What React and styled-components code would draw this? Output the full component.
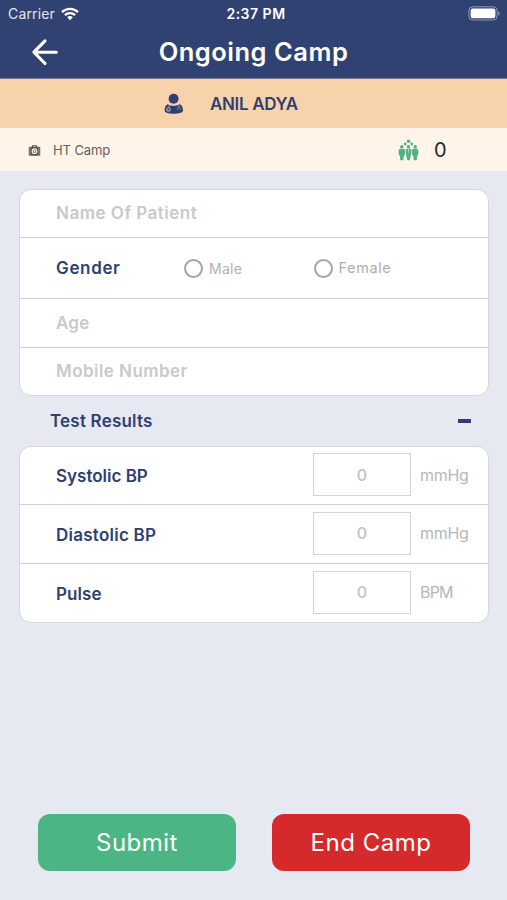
import React from "react";
import styled, { createGlobalStyle } from "styled-components";

const colors = {
  navy: "#304272",
  label: "#303f72",
  page: "#e6e9f2",
  line: "#d6d6d8",
  placeholder: "#c8c9cc",
  muted: "#aeafb2",
};

const GlobalStyle = createGlobalStyle`
  *, *::before, *::after { box-sizing: border-box; }
  body {
    margin: 0;
    background: ${colors.page};
    font-family: Inter, "Open Sans", sans-serif;
  }
`;

const Screen = styled.main`
  display: flex;
  flex-direction: column;
  width: 507px;
  height: 900px;
  overflow: hidden;
  background: ${colors.page};
`;

const Text = styled.span`
  font-size: ${(p) => p.$size}px;
  font-weight: ${(p) => p.$weight || 400};
  letter-spacing: ${(p) => p.$track || 0}px;
  color: ${(p) => p.$color || "inherit"};
  line-height: 1;
  white-space: nowrap;
`;

const Header = styled.header`
  height: 79px;
  background: ${colors.navy};
  border-bottom: 1px solid #7b7c8f;
  color: #fff;
`;

const StatusBar = styled.div`
  display: grid;
  grid-template-columns: 1fr auto 1fr;
  align-items: center;
  height: 27px;
  padding: 0 6px 0 8px;
`;

const StatusSide = styled.div`
  display: flex;
  align-items: center;
  justify-content: ${(p) => (p.$end ? "flex-end" : "flex-start")};
  gap: 6px;
`;

const Clock = styled.div`
  display: flex;
  padding-left: 3px;
`;

const TitleBar = styled.div`
  display: grid;
  grid-template-columns: 90px 1fr 90px;
  align-items: center;
  justify-items: center;
  height: 49px;
`;

const BackButton = styled.button`
  display: flex;
  padding: 0;
  border: 0;
  background: none;
  color: inherit;
`;

const Title = styled.h1`
  display: flex;
  margin: 0;
`;

const Banner = styled.section`
  display: flex;
  align-items: center;
  gap: 26px;
  height: 49px;
  padding: 1px 0 0 164px;
  background: #f8d2ab;
`;

const CampBar = styled.section`
  display: flex;
  align-items: center;
  height: 43px;
  padding: 0 61px 0 28px;
  background: #fff4ea;
`;

const CampName = styled.div`
  display: flex;
  flex: 1;
  align-items: center;
  gap: 12px;
  padding-top: 1px;
`;

const Count = styled.div`
  display: flex;
  align-items: center;
  gap: 15px;
`;

const Card = styled.section`
  flex: none;
  width: 470px;
  margin: ${(p) => p.$top || 0}px 0 0 19px;
  border: 1px solid ${colors.line};
  border-radius: 12px;
  background: #fff;
`;

const Row = styled.div`
  display: flex;
  align-items: center;
  height: ${(p) => p.$height}px;
  padding-left: 36px;

  & + & { border-top: 1px solid #d0d0d2; }
`;

const RowLabel = styled.div`
  display: flex;
  width: ${(p) => p.$width}px;
  padding-top: ${(p) => p.$drop || 0}px;
`;

const Radio = styled.label`
  display: flex;
  align-items: center;
  gap: 6px;
  width: 129.5px;
  padding-top: 1px;
`;

const RadioRing = styled.i`
  width: 19px;
  height: 19px;
  border: 2px solid #a3a4a6;
  border-radius: 50%;
`;

const SectionHeader = styled.div`
  display: flex;
  align-items: center;
  justify-content: space-between;
  height: 50px;
  padding: 0 36px 0 50px;
`;

const Minus = styled.i`
  width: 13px;
  height: 4px;
  background: ${colors.label};
`;

const ValueBox = styled.div`
  display: flex;
  align-items: center;
  justify-content: center;
  width: 98px;
  height: 43px;
  margin: 0 9px 2px 0;
  border: 1.5px solid #d3d4d6;
`;

const Unit = styled.div`
  display: flex;
  padding-bottom: 2px;
`;

const Actions = styled.footer`
  display: flex;
  gap: 36px;
  margin-top: auto;
  padding: 0 37px 29px 38px;
`;

const ActionButton = styled.button`
  display: flex;
  align-items: center;
  justify-content: center;
  width: 198px;
  height: 57px;
  padding: 0;
  border: 0;
  border-radius: 12px;
  background: ${(p) => p.$fill};
  color: #fff;
  font-family: inherit;
`;

const WifiIcon = () => (
  <svg width="18" height="14" viewBox="0 0 18 14" fill="none" stroke="#fff" strokeWidth="2.3">
    <path d="M1 5.1C5.5.8 12.5.8 17 5.1" />
    <path d="M3.9 8.2c2.9-2.8 7.3-2.8 10.2 0" />
    <path d="M6.2 10.3c1.6-1.6 4-1.6 5.6 0L9 13.2z" fill="#fff" stroke="none" />
  </svg>
);

const BatteryIcon = () => (
  <svg width="33" height="15" viewBox="0 0 33 15">
    <rect x=".8" y=".8" width="28.4" height="13.2" rx="4" fill="none" stroke="#8f98b4" />
    <rect x="2.6" y="2.6" width="24.8" height="9.6" rx="2.2" fill="#fff" />
    <path d="M30.4 5.1c1.8.8 1.8 3.8 0 4.6z" fill="#8f98b4" />
  </svg>
);

const BackIcon = () => (
  <svg
    width="28"
    height="28"
    viewBox="0 0 28 28"
    fill="none"
    stroke="#fff"
    strokeWidth="3.1"
    strokeLinecap="round"
    strokeLinejoin="round"
  >
    <path d="M14 2.9 2.9 14.2 14 25.5M3.5 14.2h21.8" />
  </svg>
);

const DoctorIcon = () => (
  <svg width="20" height="22" viewBox="0 0 20 22">
    <circle cx="9.6" cy="5.7" r="5" fill={colors.label} />
    <path
      d="M4 11.2c3 2.2 8.2 2.2 11.3 0 2.7.6 3.7 3.4 3.7 6.3 0 2.1-4.3 3.3-9.4 3.3S.6 19.6.6 17.5c0-2.9.9-5.7 3.4-6.3z"
      fill={colors.label}
    />
    <circle cx="4.5" cy="16.4" r="1.7" fill="none" stroke="#b7a7a2" strokeWidth="1.1" />
    <path d="M5.1 14.6v-2.4M14.9 12.2v2.2M13.4 16.7c0-3 3-3 3 0" fill="none" stroke="#a5959a" strokeWidth="1" />
  </svg>
);

const KitIcon = () => (
  <svg width="13" height="13" viewBox="0 0 13 13" fill="#57534e">
    <path d="M4 3V1.2h5V3H7.8v-.8H5.2V3z" />
    <path d="M.8 2.8h1v9h-1zM2.2 2.8h8.6v9H2.2zM11.2 2.8h1v9h-1z" />
    <circle cx="6.5" cy="7.2" r="2.3" fill="none" stroke="#fff4ea" strokeWidth="1.1" />
    <path d="M6.5 6v2.4M5.3 7.2h2.4" stroke="#fff4ea" strokeWidth=".9" />
  </svg>
);

const PeopleIcon = () => (
  <svg width="21" height="22" viewBox="0 0 21 22" fill="#4bb482">
    <circle cx="10.5" cy="2.2" r="1.7" />
    <circle cx="7.2" cy="5" r="1.4" />
    <circle cx="13.8" cy="5" r="1.4" />
    <circle cx="3.8" cy="7.7" r="1.7" />
    <circle cx="10.5" cy="7.7" r="1.7" />
    <circle cx="17.2" cy="7.7" r="1.7" />
    <path d="M2.2 9.8h3.2c1.4 0 1.7 1.5 1.7 3.2s-.4 3.5-1.4 4.1l-.4 4.2h-3L1.9 17C.9 16.4.6 14.7.6 13s.4-3.2 1.6-3.2z" />
    <path d="M15.6 9.8h3.2c1.2 0 1.6 1.5 1.6 3.2s-.3 3.4-1.3 4l-.4 4.3h-3l-.4-4.2c-1-.6-1.4-2.4-1.4-4.1s.3-3.2 1.7-3.2z" />
    <path d="M8.8 9.8h3.4c1.1 0 1.3.8 1.2 1.8l-.6 4.6-1.1 5.1H9.3l-1.1-5.1-.6-4.6c-.1-1 .1-1.8 1.2-1.8z" />
    <path d="M10.5 10v3.8" stroke="#c9e5d2" strokeWidth=".7" />
  </svg>
);

const measurements = [
  { name: "Systolic BP", unit: "mmHg", track: 0, unitTrack: -0.3, height: 57 },
  { name: "Diastolic BP", unit: "mmHg", track: 0.25, unitTrack: -0.3, height: 59 },
  { name: "Pulse", unit: "BPM", track: 0.1, unitTrack: -0.8, height: 59 },
];

const Placeholder = ({ children, track }) => (
  <Text $size={17} $weight={600} $track={track} $color={colors.placeholder}>{children}</Text>
);

const Label = ({ children, track }) => (
  <Text $size={17} $weight={600} $track={track} $color={colors.label}>{children}</Text>
);

export default function App() {
  return (
    <>
      <GlobalStyle />
      <Screen>
        <Header>
          <StatusBar>
            <StatusSide>
              <Text $size={14} $track={0.15} $color="#e4e7f0">Carrier</Text>
              <WifiIcon />
            </StatusSide>
            <Clock><Text $size={14} $weight={600} $track={0.5}>2:37 PM</Text></Clock>
            <StatusSide $end>
              <BatteryIcon />
            </StatusSide>
          </StatusBar>
          <TitleBar>
            <BackButton aria-label="Back"><BackIcon /></BackButton>
            <Title><Text $size={25.5} $weight={600} $track={0.5}>Ongoing Camp</Text></Title>
          </TitleBar>
        </Header>
        <Banner>
          <DoctorIcon />
          <Text $size={17} $weight={600} $track={-0.35} $color={colors.label}>ANIL ADYA</Text>
        </Banner>
        <CampBar>
          <CampName>
            <KitIcon />
            <Text $size={13} $track={-0.1} $color="#66605c">HT Camp</Text>
          </CampName>
          <Count>
            <PeopleIcon />
            <Text $size={20} $track={-0.5} $color="#2e2620">0</Text>
          </Count>
        </CampBar>

        <Card $top={18}>
          <Row $height={47}><Placeholder track={0.5}>Name Of Patient</Placeholder></Row>
          <Row $height={61}>
            <RowLabel $width={128}><Label track={0.65}>Gender</Label></RowLabel>
            <Radio><RadioRing /><Text $size={14} $track={0.3} $color={colors.muted}>Male</Text></Radio>
            <Radio><RadioRing /><Text $size={14.5} $track={0.6} $color={colors.muted}>Female</Text></Radio>
          </Row>
          <Row $height={49}><Placeholder track={0.2}>Age</Placeholder></Row>
          <Row $height={48}><Placeholder track={0.45}>Mobile Number</Placeholder></Row>
        </Card>

        <SectionHeader>
          <Label track={0.2}>Test Results</Label>
          <Minus />
        </SectionHeader>

        <Card>
          {measurements.map((m) => (
            <Row key={m.name} $height={m.height}>
              <RowLabel $width={257} $drop={2}><Label track={m.track}>{m.name}</Label></RowLabel>
              <ValueBox><Text $size={16} $weight={500} $color="#c0c1c3">0</Text></ValueBox>
              <Unit><Text $size={16} $track={m.unitTrack} $color="#b6b7b9">{m.unit}</Text></Unit>
            </Row>
          ))}
        </Card>

        <Actions>
          <ActionButton $fill="#4bb583"><Text $size={24} $track={0.5}>Submit</Text></ActionButton>
          <ActionButton $fill="#d6292b"><Text $size={24} $track={0.5}>End Camp</Text></ActionButton>
        </Actions>
      </Screen>
    </>
  );
}
